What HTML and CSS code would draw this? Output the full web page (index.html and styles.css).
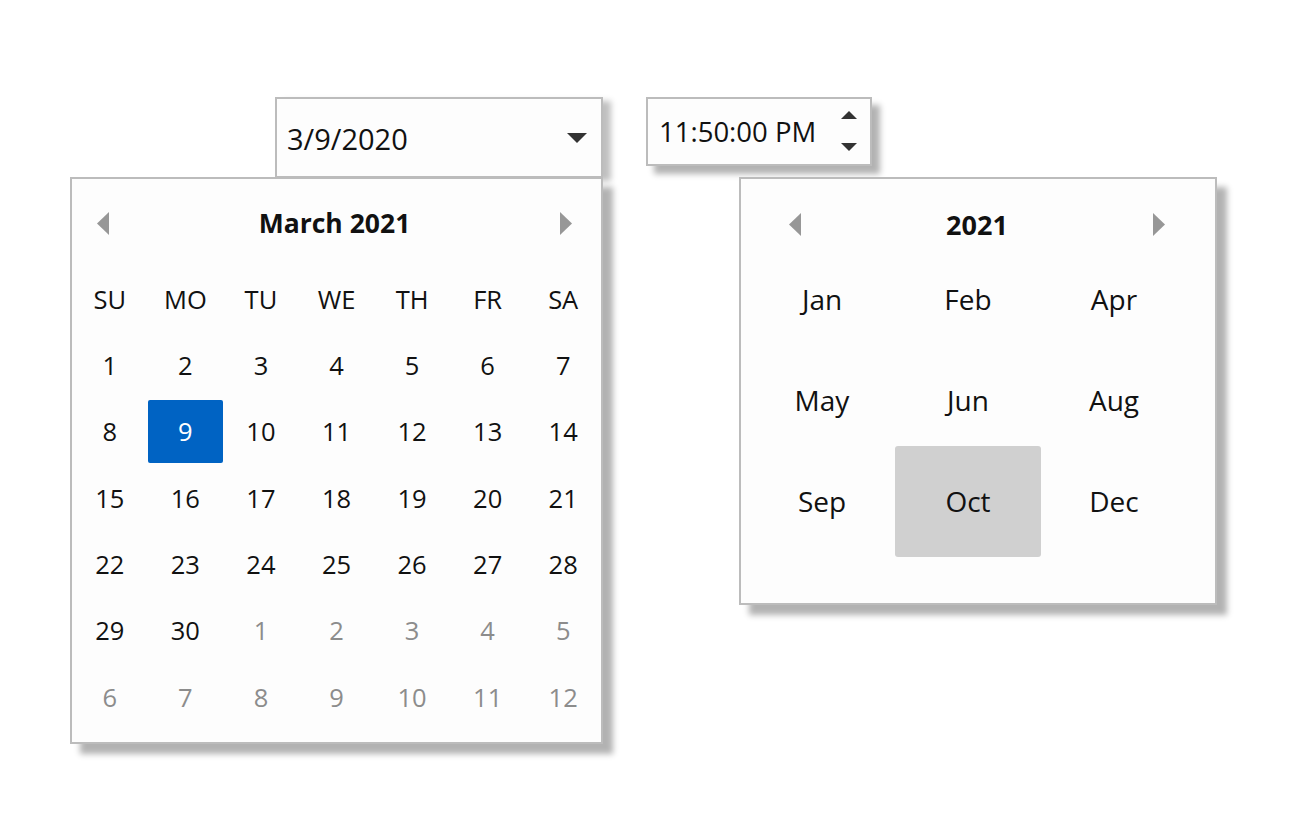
FILE: index.html
```html
<!DOCTYPE html>
<html>
<head>
<meta charset="utf-8">
<link rel="stylesheet" href="styles.css">
</head>
<body>
<div class="stage">
  <div class="date-col">
    <div class="date-input">
      <span class="date-value">3/9/2020</span>
      <svg class="dd-arrow" width="20" height="10" viewBox="0 0 20 10"><path d="M0 0H20L10 10Z" fill="#333"/></svg>
    </div>
    <div class="calendar">
      <div class="cal-head">
        <svg class="nav" width="12" height="23" viewBox="0 0 12 23"><path d="M12 0V23L0 11.5Z" fill="#979797"/></svg>
        <span class="cal-title">March 2021</span>
        <svg class="nav" width="12" height="23" viewBox="0 0 12 23"><path d="M0 0V23L12 11.5Z" fill="#979797"/></svg>
      </div>
      <div class="cal-grid">
        <div class="cell">SU</div><div class="cell">MO</div><div class="cell">TU</div><div class="cell">WE</div><div class="cell">TH</div><div class="cell">FR</div><div class="cell">SA</div>
        <div class="cell">1</div><div class="cell">2</div><div class="cell">3</div><div class="cell">4</div><div class="cell">5</div><div class="cell">6</div><div class="cell">7</div>
        <div class="cell">8</div><div class="cell selected">9</div><div class="cell">10</div><div class="cell">11</div><div class="cell">12</div><div class="cell">13</div><div class="cell">14</div>
        <div class="cell">15</div><div class="cell">16</div><div class="cell">17</div><div class="cell">18</div><div class="cell">19</div><div class="cell">20</div><div class="cell">21</div>
        <div class="cell">22</div><div class="cell">23</div><div class="cell">24</div><div class="cell">25</div><div class="cell">26</div><div class="cell">27</div><div class="cell">28</div>
        <div class="cell">29</div><div class="cell">30</div><div class="cell muted">1</div><div class="cell muted">2</div><div class="cell muted">3</div><div class="cell muted">4</div><div class="cell muted">5</div>
        <div class="cell muted">6</div><div class="cell muted">7</div><div class="cell muted">8</div><div class="cell muted">9</div><div class="cell muted">10</div><div class="cell muted">11</div><div class="cell muted">12</div>
      </div>
    </div>
  </div>
  <div class="time-col">
    <div class="time-input">
      <span class="time-value">11:50:00 PM</span>
      <div class="spinner">
        <svg width="16" height="8" viewBox="0 0 16 8"><path d="M0 8H16L8 0Z" fill="#333"/></svg>
        <svg width="16" height="8" viewBox="0 0 16 8"><path d="M0 0H16L8 8Z" fill="#333"/></svg>
      </div>
    </div>
    <div class="months">
      <div class="m-head">
        <svg class="nav" width="12" height="23" viewBox="0 0 12 23"><path d="M12 0V23L0 11.5Z" fill="#979797"/></svg>
        <span class="m-title">2021</span>
        <svg class="nav" width="12" height="23" viewBox="0 0 12 23"><path d="M0 0V23L12 11.5Z" fill="#979797"/></svg>
      </div>
      <div class="m-grid">
        <div class="m-cell">Jan</div><div class="m-cell">Feb</div><div class="m-cell">Apr</div>
        <div class="m-cell">May</div><div class="m-cell">Jun</div><div class="m-cell">Aug</div>
        <div class="m-cell">Sep</div><div class="m-cell current">Oct</div><div class="m-cell">Dec</div>
      </div>
    </div>
  </div>
</div>
</body>
</html>
```

FILE: styles.css
```css
html, body {
  margin: 0;
  padding: 0;
  background: #ffffff;
}
body {
  min-height: 100vh;
  font-family: "Open Sans", "Noto Sans", sans-serif;
  color: #111111;
}
.stage {
  display: flex;
  align-items: flex-start;
  padding: 97px 0 0 70px;
  gap: 43px;
}
.date-col {
  display: flex;
  flex-direction: column;
  align-items: flex-end;
}
.date-input {
  box-sizing: border-box;
  width: 328px;
  height: 80px;
  border: 2px solid #bcbcbc;
  border-bottom-width: 1px;
  background: #fdfdfd;
  display: flex;
  align-items: center;
  padding: 0 14px 0 10px;
  box-shadow: 8px 4px 6px rgba(0,0,0,0.25);
  position: relative;
  z-index: 1;
}
.date-value {
  flex: 1;
  font-size: 29px;
  padding-top: 2px;
}
.calendar {
  box-sizing: border-box;
  width: 533px;
  height: 567px;
  border: 2px solid #bcbcbc;
  background: #fdfdfd;
  box-shadow: 10px 10px 6px rgba(0,0,0,0.3);
  position: relative;
  z-index: 2;
}
.cal-head {
  height: 88px;
  display: flex;
  align-items: center;
  justify-content: space-between;
  padding: 0 29px 0 25px;
}
.cal-title {
  font-weight: 700;
  font-size: 26.5px;
  margin-top: -1px;
}
.m-title {
  font-weight: 700;
  font-size: 27px;
}
.cal-grid {
  display: grid;
  grid-template-columns: repeat(7, 1fr);
  grid-auto-rows: 63px;
  row-gap: 3.4px;
}
.cell {
  display: flex;
  align-items: center;
  justify-content: center;
  font-size: 25.5px;
}
.cell.muted {
  color: #8c8c8c;
}
.cell.selected {
  background: #0063c3;
  color: #ffffff;
  border-radius: 2px;
}
.time-col {
  display: flex;
  flex-direction: column;
  align-items: flex-start;
}
.time-input {
  box-sizing: border-box;
  width: 226px;
  height: 69px;
  border: 2px solid #bcbcbc;
  background: #fdfdfd;
  display: flex;
  align-items: center;
  padding: 0 13px 0 11px;
  box-shadow: 8px 8px 6px rgba(0,0,0,0.3);
}
.time-value {
  flex: 1;
  font-size: 27.5px;
}
.spinner {
  display: flex;
  flex-direction: column;
  gap: 24px;
  margin-top: -2px;
}
.spinner svg {
  display: block;
}
.months {
  box-sizing: border-box;
  width: 478px;
  height: 428px;
  margin: 11px 0 0 93px;
  border: 2px solid #bcbcbc;
  background: #fdfdfd;
  box-shadow: 10px 10px 6px rgba(0,0,0,0.3);
  padding: 20px 28px 0 8px;
}
.m-head {
  height: 50px;
  display: flex;
  align-items: center;
  justify-content: space-between;
  padding: 0 22px 0 40px;
}
.m-grid {
  display: grid;
  grid-template-columns: repeat(3, 1fr);
  grid-auto-rows: 101px;
}
.m-cell {
  display: flex;
  align-items: center;
  justify-content: center;
  font-size: 28px;
  padding-bottom: 2px;
}
.m-cell.current {
  background: #d0d0d0;
  border-radius: 3px;
  margin: -5px 0;
}
```
